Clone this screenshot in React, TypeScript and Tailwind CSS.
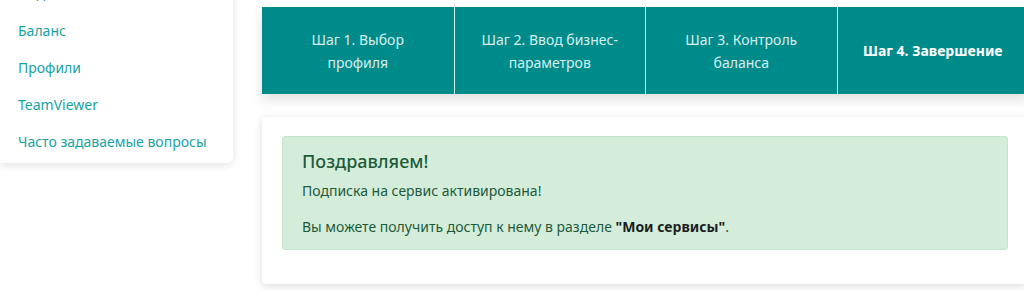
import React from 'react';

const menu = ['Подписки', 'Баланс', 'Профили', 'TeamViewer', 'Часто задаваемые вопросы'];

const steps = [
  { lines: ['Шаг 1. Выбор', 'профиля'], active: false },
  { lines: ['Шаг 2. Ввод бизнес-', 'параметров'], active: false },
  { lines: ['Шаг 3. Контроль', 'баланса'], active: false },
  { lines: ['Шаг 4. Завершение'], active: true },
];

const App: React.FC = () => {
  return (
    <div
      className="w-[1024px] h-[290px] overflow-hidden bg-white flex items-start"
      style={{ fontFamily: '"Noto Sans", "Open Sans", sans-serif' }}
    >
      {/* Sidebar */}
      <aside className="w-[233px] shrink-0 -mt-[25px] bg-white rounded-br-md shadow-[0_2px_10px_rgba(0,0,0,0.12)] pb-[3px]">
        <ul>
          {menu.map(item => (
            <li key={item} className="px-[18px] py-[8px] text-[14px] leading-[21px] text-[#17a2a2]">
              {item}
            </li>
          ))}
        </ul>
      </aside>

      {/* Main */}
      <main className="ml-[29px] w-[766px] shrink-0 pt-[7px]">
        <div className="grid grid-cols-4 h-[87px] bg-[#008b8b] shadow-[0_6px_12px_rgba(0,0,0,0.12)]">
          {steps.map((s, i) => (
            <div
              key={s.lines[0]}
              className={`flex flex-col items-center justify-center text-center px-[10px] text-[14px] leading-[23px] whitespace-nowrap ${i > 0 ? 'border-l border-[#d9f0f0]' : ''} ${s.active ? 'font-bold text-white' : 'text-[#d6eeee]'}`}
            >
              {s.lines.map(l => (
                <span key={l}>{l}</span>
              ))}
            </div>
          ))}
        </div>

        <div className="mt-[23px] bg-white rounded-sm shadow-[0_2px_8px_rgba(0,0,0,0.14)] pt-[19px] px-[20px] pb-[34px]">
          <div className="bg-[#d4edda] border border-[#c3e6cb] rounded-[3px] px-[19px] pt-[12px] pb-[12px] text-[#1d5a3a]">
            <h4 className="text-[18px] leading-[24px] font-medium mb-[8px]">Поздравляем!</h4>
            <p className="text-[14px] leading-[20px] mb-[16px]">Подписка на сервис активирована!</p>
            <p className="text-[14px] leading-[20px]">
              Вы можете получить доступ к нему в разделе <b className="text-[#1b1e21]">"Мои сервисы"</b>.
            </p>
          </div>
        </div>
      </main>
    </div>
  );
};

export default App;
